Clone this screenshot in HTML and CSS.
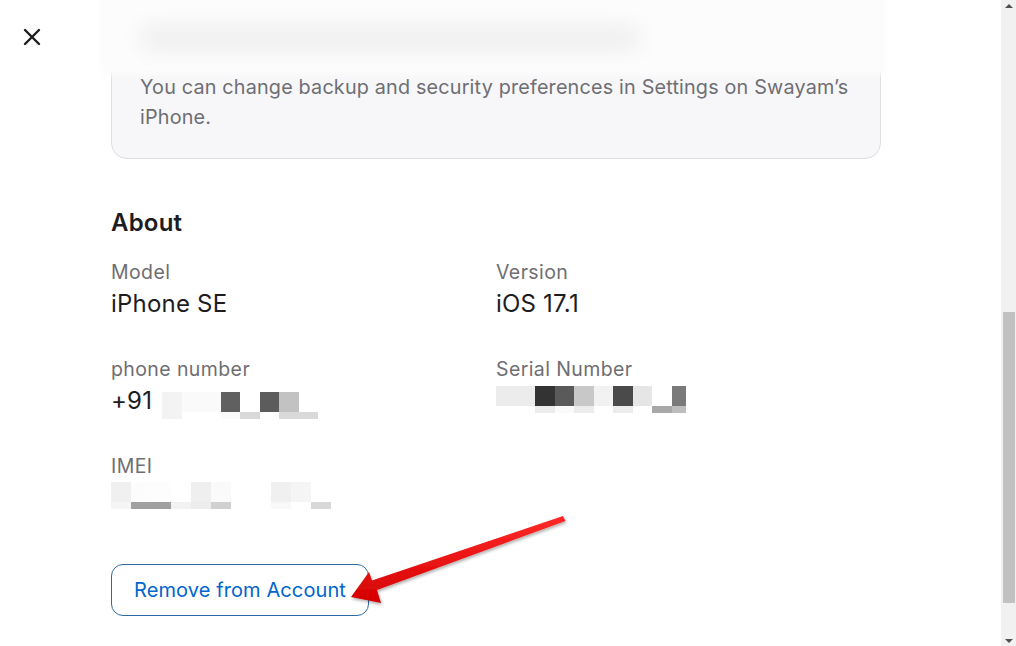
FILE: index.html
```html
<!DOCTYPE html>
<html lang="en">
<head>
<meta charset="utf-8">
<title>Device details</title>
<link rel="stylesheet" href="styles.css">
</head>
<body>
<div class="window">
  <div class="main">
    <div class="close-col">
      <button class="close" aria-label="Close">
        <svg width="18" height="18" viewBox="0 0 18 18"><path d="M2 2 L16 16 M16 2 L2 16" stroke="#1d1d1f" stroke-width="2.4" stroke-linecap="round"/></svg>
      </button>
    </div>
    <div class="content">
      <div class="card">
        <p class="card-text">You can change backup and security preferences in Settings on Swayam’s iPhone.</p>
      </div>

      <h2 class="heading">About</h2>

      <div class="grid">
        <div class="field">
          <div class="label">Model</div>
          <div class="value">iPhone SE</div>
        </div>
        <div class="field">
          <div class="label">Version</div>
          <div class="value">iOS 17.1</div>
        </div>
        <div class="field">
          <div class="label">phone number</div>
          <div class="value value-row">+91 <span class="mosaic m-phone">
            <i style="background:#f3f3f3"></i><i style="background:#fafafa"></i><i style="background:#fafafa"></i><i style="background:#606060"></i><i></i><i style="background:#5c5c5c"></i><i style="background:#c2c2c2"></i><i></i>
            <i style="background:#f3f3f3"></i><i></i><i></i><i style="background:#fafafa"></i><i style="background:#d9d9d9"></i><i></i><i style="background:#d9d9d9"></i><i style="background:#d9d9d9"></i>
          </span></div>
        </div>
        <div class="field">
          <div class="label">Serial Number</div>
          <div class="value value-row"><span class="mosaic m-serial">
            <i style="background:#ececec"></i><i style="background:#ececec"></i><i style="background:#333333"></i><i style="background:#5a5a5a"></i><i style="background:#c8c8c8"></i><i style="background:#f2f2f2"></i><i style="background:#4a4a4a"></i><i style="background:#e6e6e6"></i><i></i><i style="background:#7a7a7a"></i>
            <i></i><i></i><i style="background:#ececec"></i><i style="background:#fafafa"></i><i style="background:#ececec"></i><i></i><i style="background:#ececec"></i><i></i><i style="background:#a8a8a8"></i><i style="background:#bdbdbd"></i>
          </span></div>
        </div>
        <div class="field">
          <div class="label">IMEI</div>
          <div class="value value-row"><span class="mosaic m-imei">
            <i style="background:#f0f0f0"></i><i style="background:#fcfcfc"></i><i style="background:#fdfdfd"></i><i></i><i style="background:#efefef"></i><i style="background:#fafafa"></i><i></i><i></i><i style="background:#f0f0f0"></i><i style="background:#f5f5f5"></i><i></i>
            <i style="background:#f5f5f5"></i><i style="background:#a0a0a0"></i><i style="background:#a0a0a0"></i><i style="background:#f2f2f2"></i><i style="background:#ececec"></i><i style="background:#d0d0d0"></i><i></i><i></i><i style="background:#f8f8f8"></i><i></i><i style="background:#d8d8d8"></i>
          </span></div>
        </div>
      </div>

      <div class="actions">
        <button class="remove">Remove from Account</button>
      </div>
    </div>

    <div class="blur-cover"><div class="blur-line"></div></div>

    <svg class="arrow" width="240" height="110" viewBox="340 505 240 110">
      <defs>
        <linearGradient id="ag" x1="0" y1="0" x2="0" y2="1">
          <stop offset="0" stop-color="#ff2a2a"/>
          <stop offset="1" stop-color="#d40000"/>
        </linearGradient>
        <filter id="sh" x="-10%" y="-10%" width="130%" height="140%">
          <feDropShadow dx="1" dy="2" stdDeviation="1.5" flood-color="#000" flood-opacity="0.3"/>
        </filter>
      </defs>
      <path d="M351 597 L369 572 L372 580.5 L563 516 L565.5 521 L377 590 L381 603 Z" fill="url(#ag)" filter="url(#sh)"/>
    </svg>
  </div>

  <div class="scrollbar">
    <div class="sb-btn"><span class="tri-up"></span></div>
    <div class="sb-track">
      <div class="sb-thumb"></div>
    </div>
    <div class="sb-btn"><span class="tri-down"></span></div>
  </div>
</div>
</body>
</html>
```

FILE: styles.css
```css
* { box-sizing: border-box; }

html, body {
  margin: 0;
  padding: 0;
  height: 646px;
  overflow: hidden;
  background: #ffffff;
}

body {
  font-family: Inter, "Noto Sans", "Liberation Sans", sans-serif;
  color: #1d1d1f;
}

.window {
  display: flex;
  width: 1016px;
  height: 646px;
}

.main {
  flex: 1;
  position: relative;
  display: flex;
  overflow: hidden;
}

.close-col {
  width: 111px;
  flex: none;
  padding: 28px 0 0 23px;
}

.close {
  border: 0;
  background: none;
  padding: 0;
  width: 18px;
  height: 18px;
  display: block;
  cursor: pointer;
}

.content {
  width: 770px;
  flex: none;
  display: flex;
  flex-direction: column;
}

.card {
  margin-top: -30px;
  padding: 101px 28px 26px 28px;
  background: #f7f7f9;
  border: 1px solid #dedee2;
  border-radius: 16px;
}

.card-text {
  margin: 0;
  font-size: 19.8px;
  line-height: 30px;
  color: #6e6e73;
  letter-spacing: 0.18px;
}

.heading {
  margin: 50px 0 0 0;
  font-size: 24px;
  line-height: 28px;
  font-weight: 600;
  color: #1d1d1f;
  letter-spacing: 0.2px;
}

.grid {
  margin-top: 23px;
  display: grid;
  grid-template-columns: 385px 385px;
  row-gap: 38px;
}

.field {
  display: flex;
  flex-direction: column;
  gap: 5px;
}

.label {
  font-size: 19.5px;
  line-height: 24px;
  color: #6e6e73;
  letter-spacing: 0.4px;
}

.value {
  font-size: 24px;
  line-height: 30px;
  height: 30px;
  color: #1d1d1f;
  letter-spacing: 0.2px;
}

.value-row {
  display: flex;
  align-items: flex-start;
  gap: 10px;
}

.mosaic {
  display: grid;
  grid-auto-rows: 20px 7px;
}

.mosaic i {
  display: block;
}

.m-phone {
  grid-template-columns: repeat(8, 19.5px);
  margin-top: 6px;
}

.m-serial {
  grid-template-columns: repeat(9, 19.5px) 14px;
  margin-top: 0;
}

.m-imei {
  grid-template-columns: repeat(11, 20px);
  margin-top: -1px;
}

.actions {
  margin-top: 51px;
  display: flex;
}

.remove {
  width: 258px;
  height: 52px;
  border: 1px solid #2a6aa6;
  border-radius: 12px;
  background: #ffffff;
  color: #0066cc;
  font-family: Inter, "Noto Sans", "Liberation Sans", sans-serif;
  font-size: 20px;
  letter-spacing: 0.1px;
  padding: 0;
  cursor: pointer;
}

.blur-cover {
  position: absolute;
  left: 100px;
  top: -6px;
  width: 786px;
  height: 81px;
  background: #fcfcfc;
  filter: blur(3px);
}

.blur-line {
  position: absolute;
  left: 40px;
  top: 30px;
  width: 500px;
  height: 28px;
  border-radius: 14px;
  background: #f0f0f0;
  filter: blur(9px);
}

.arrow {
  position: absolute;
  left: 340px;
  top: 505px;
  overflow: visible;
}

.scrollbar {
  width: 15px;
  flex: none;
  background: #f1f1f1;
  display: flex;
  flex-direction: column;
}

.sb-btn {
  height: 17px;
  display: flex;
  align-items: center;
  justify-content: center;
  flex: none;
}

.tri-up {
  width: 0;
  height: 0;
  border-left: 4px solid transparent;
  border-right: 4px solid transparent;
  border-bottom: 4px solid #505050;
  margin-top: -6px;
}

.tri-down {
  width: 0;
  height: 0;
  border-left: 4px solid transparent;
  border-right: 4px solid transparent;
  border-top: 4px solid #505050;
  margin-top: 6px;
}

.sb-track {
  flex: 1;
  display: flex;
  flex-direction: column;
  justify-content: flex-end;
  padding: 0 1px 26px 2px;
}

.sb-thumb {
  height: 291px;
  background: #c1c1c1;
}
```
